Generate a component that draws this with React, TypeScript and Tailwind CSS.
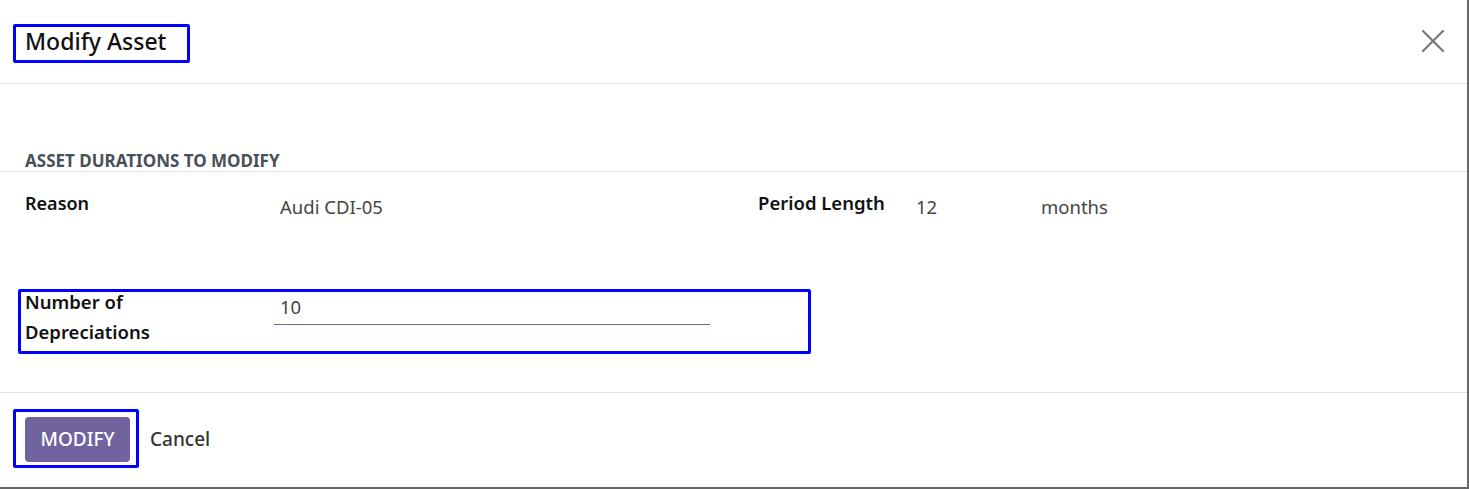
import React from "react"

const font = { fontFamily: '"Noto Sans", "Open Sans", sans-serif' }

function CloseIcon() {
  return (
    <svg width="24" height="24" viewBox="0 0 24 24" className="text-[#777]">
      <path d="M2 2 L22 22 M22 2 L2 22" stroke="currentColor" strokeWidth="2.2" strokeLinecap="round" />
    </svg>
  )
}

export default function App() {
  return (
    <div
      style={font}
      className="relative w-[1469px] h-[489px] bg-white border-r-2 border-b-2 border-[#666] overflow-hidden text-[#212529]"
    >
      {/* header */}
      <div className="h-[84px] border-b border-[#dee2e6] flex items-center justify-between pl-[25px] pr-[22px]">
        <h1 className="text-[23px] font-medium text-[#111] leading-none -mt-[1px]">Modify Asset</h1>
        <button className="p-0 -mt-[1px]">
          <CloseIcon />
        </button>
      </div>

      {/* body */}
      <div className="h-[308px]">
        <div className="pl-[25px] h-[88px] border-b border-[#dee2e6] flex items-end">
          <span className="text-[17px] font-bold uppercase text-[#495057] leading-[20px]">
            Asset durations to modify
          </span>
        </div>

        <div className="flex pt-[19px] h-[115px]">
          <div className="flex w-[758px] pl-[25px]">
            <div className="w-[255px] text-[18px] font-semibold text-[#111] leading-[24px]">Reason</div>
            <div className="text-[18.5px] text-[#444] leading-[24px] mt-[4px]">Audi CDI-05</div>
          </div>
          <div className="flex">
            <div className="w-[158px] text-[18.5px] font-semibold text-[#111] leading-[24px]">Period Length</div>
            <div className="w-[125px] text-[18.5px] text-[#444] leading-[24px] mt-[4px]">12</div>
            <div className="text-[18.5px] text-[#444] leading-[24px] mt-[4px]">months</div>
          </div>
        </div>

        <div className="flex pl-[25px]">
          <div className="w-[249px] text-[18.5px] font-semibold text-[#111] leading-[30px]">
            Number of
            <br />
            Depreciations
          </div>
          <div className="w-[436px] h-[38px] border-b border-[#71639e] pl-[6px] pt-[8px]">
            <span className="text-[18.5px] text-[#444] leading-[24px]">10</span>
          </div>
        </div>
      </div>

      {/* footer */}
      <div className="border-t border-[#dee2e6] flex items-center gap-[20px] pl-[25px] pt-[24px]">
        <button className="w-[105px] h-[45px] rounded-[4px] bg-[#71639e] text-white text-[19px] font-medium">
          MODIFY
        </button>
        <button className="text-[19px] text-[#333] font-medium">Cancel</button>
      </div>

      {/* annotation boxes */}
      <div className="absolute left-[13px] top-[24px] w-[177px] h-[39px] border-[3px] border-[#0000ff] rounded-[2px]" />
      <div className="absolute left-[18px] top-[289px] w-[793px] h-[65px] border-[3px] border-[#0000ff] rounded-[2px]" />
      <div className="absolute left-[13px] top-[409px] w-[126px] h-[59px] border-[3px] border-[#0000ff] rounded-[2px]" />
    </div>
  )
}
